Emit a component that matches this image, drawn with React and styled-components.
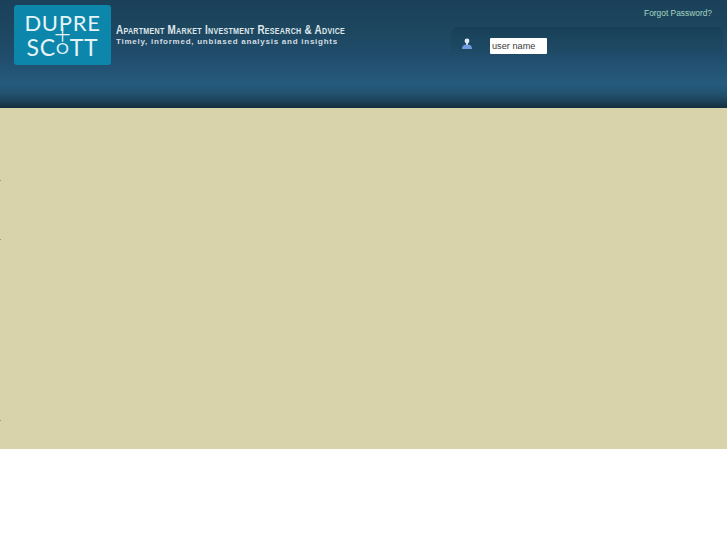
import styled, { createGlobalStyle } from 'styled-components';

const GlobalStyle = createGlobalStyle`
  html, body {
    margin: 0;
    padding: 0;
    background: #fff;
    font-family: "Liberation Sans", Arial, sans-serif;
  }
`;

const Page = styled.div`
  width: 727px;
  height: 545px;
  overflow: hidden;
  background: #fff;
`;

const Header = styled.header`
  box-sizing: border-box;
  height: 108px;
  display: flex;
  align-items: flex-start;
  padding: 5px 4px 0 14px;
  background: linear-gradient(
    to bottom,
    #1b415a 0,
    #1d465f 30px,
    #214e6e 60px,
    #265a7e 84px,
    #23536f 93px,
    #1c4259 101px,
    #16303f 107px
  );
`;

const Logo = styled.div`
  flex: none;
  width: 97px;
  height: 60px;
  border-radius: 3px;
  background: #0d86ab;
  color: #e6f4f7;
  display: flex;
  flex-direction: column;
  align-items: center;
  font-family: "Lato", sans-serif;
  font-weight: 400;
`;

const LogoWord = styled.div`
  font-size: ${props => props.$size}px;
  line-height: 20px;
  letter-spacing: ${props => props.$spacing};
  margin-top: ${props => props.$top || '0'};
  white-space: nowrap;
`;

const SmallO = styled.span`
  font-size: 16px;
  vertical-align: 2px;
`;

const Plus = styled.div`
  font-size: 30px;
  line-height: 4px;
  height: 4px;
  margin-top: -2px;
  margin-bottom: 2px;
  font-weight: 300;
`;

const Tagline = styled.div`
  margin: 19px 0 0 5px;
  width: 240px;
  color: #dfe6ea;
`;

const TagTitle = styled.div`
  font-size: 12.5px;
  line-height: 13px;
  font-weight: 700;
  font-variant: small-caps;
  letter-spacing: 0.35px;
  white-space: nowrap;
  transform: scaleX(0.79);
  transform-origin: left center;
`;

const TagSub = styled.div`
  font-size: 8px;
  line-height: 10px;
  font-weight: 700;
  letter-spacing: 0.75px;
  white-space: nowrap;
  color: #d3dde3;
`;

const Account = styled.div`
  margin-left: auto;
  width: 272px;
  display: flex;
  flex-direction: column;
`;

const Forgot = styled.a`
  align-self: flex-end;
  margin: 3px 11px 0 0;
  font-size: 8.4px;
  line-height: 10px;
  color: #a5d6c0;
`;

const Panel = styled.div`
  margin-top: 9px;
  height: 50px;
  box-sizing: border-box;
  padding-top: 11px;
  padding-left: 10px;
  display: flex;
  align-items: flex-start;
  border-radius: 7px 7px 0 0;
  background: linear-gradient(to bottom, #173e56 0, #1c465f 12px, rgba(36, 86, 120, 0) 30px);
`;

const UserIcon = styled.svg`
  flex: none;
  width: 12px;
  height: 12px;
`;

const NameField = styled.input`
  box-sizing: border-box;
  margin-left: 17px;
  width: 57px;
  height: 16px;
  padding: 0 2px 1px;
  border: 0;
  border-radius: 1px;
  background: #fff;
  font-family: "Liberation Sans", sans-serif;
  font-size: 9.2px;
  color: #3a3a3a;
  &::placeholder {
    color: #3a3a3a;
    opacity: 1;
  }
`;

const Content = styled.main`
  position: relative;
  height: 341px;
  background: #d8d3ab;
`;

const Speck = styled.i`
  position: absolute;
  left: 0;
  top: ${props => props.$top}px;
  width: 1px;
  height: 1px;
  background: #98968a;
`;

export default function App() {
  return (
    <Page>
      <GlobalStyle />
      <Header>
        <Logo>
          <LogoWord $size={22} $top="8px" $spacing="0.7px">DUPRE</LogoWord>
          <Plus>+</Plus>
          <LogoWord $size={23} $spacing="0.8px">SC<SmallO>O</SmallO>TT</LogoWord>
        </Logo>
        <Tagline>
          <TagTitle>Apartment Market Investment Research &amp; Advice</TagTitle>
          <TagSub>Timely, informed, unbiased analysis and insights</TagSub>
        </Tagline>
        <Account>
          <Forgot>Forgot Password?</Forgot>
          <Panel>
            <UserIcon viewBox="0 0 12 12">
              <circle cx="6" cy="3" r="2.4" fill="#dfe9f5" />
              <rect x="5" y="5" width="2" height="2" fill="#cfdcec" />
              <path d="M1 11 Q1 7 4.5 6.8 L7.5 6.8 Q11 7 11 11 Z" fill="#6f9ade" />
            </UserIcon>
            <NameField placeholder="user name" />
          </Panel>
        </Account>
      </Header>
      <Content>
        <Speck $top={72} />
        <Speck $top={131} />
        <Speck $top={312} />
      </Content>
    </Page>
  );
}
